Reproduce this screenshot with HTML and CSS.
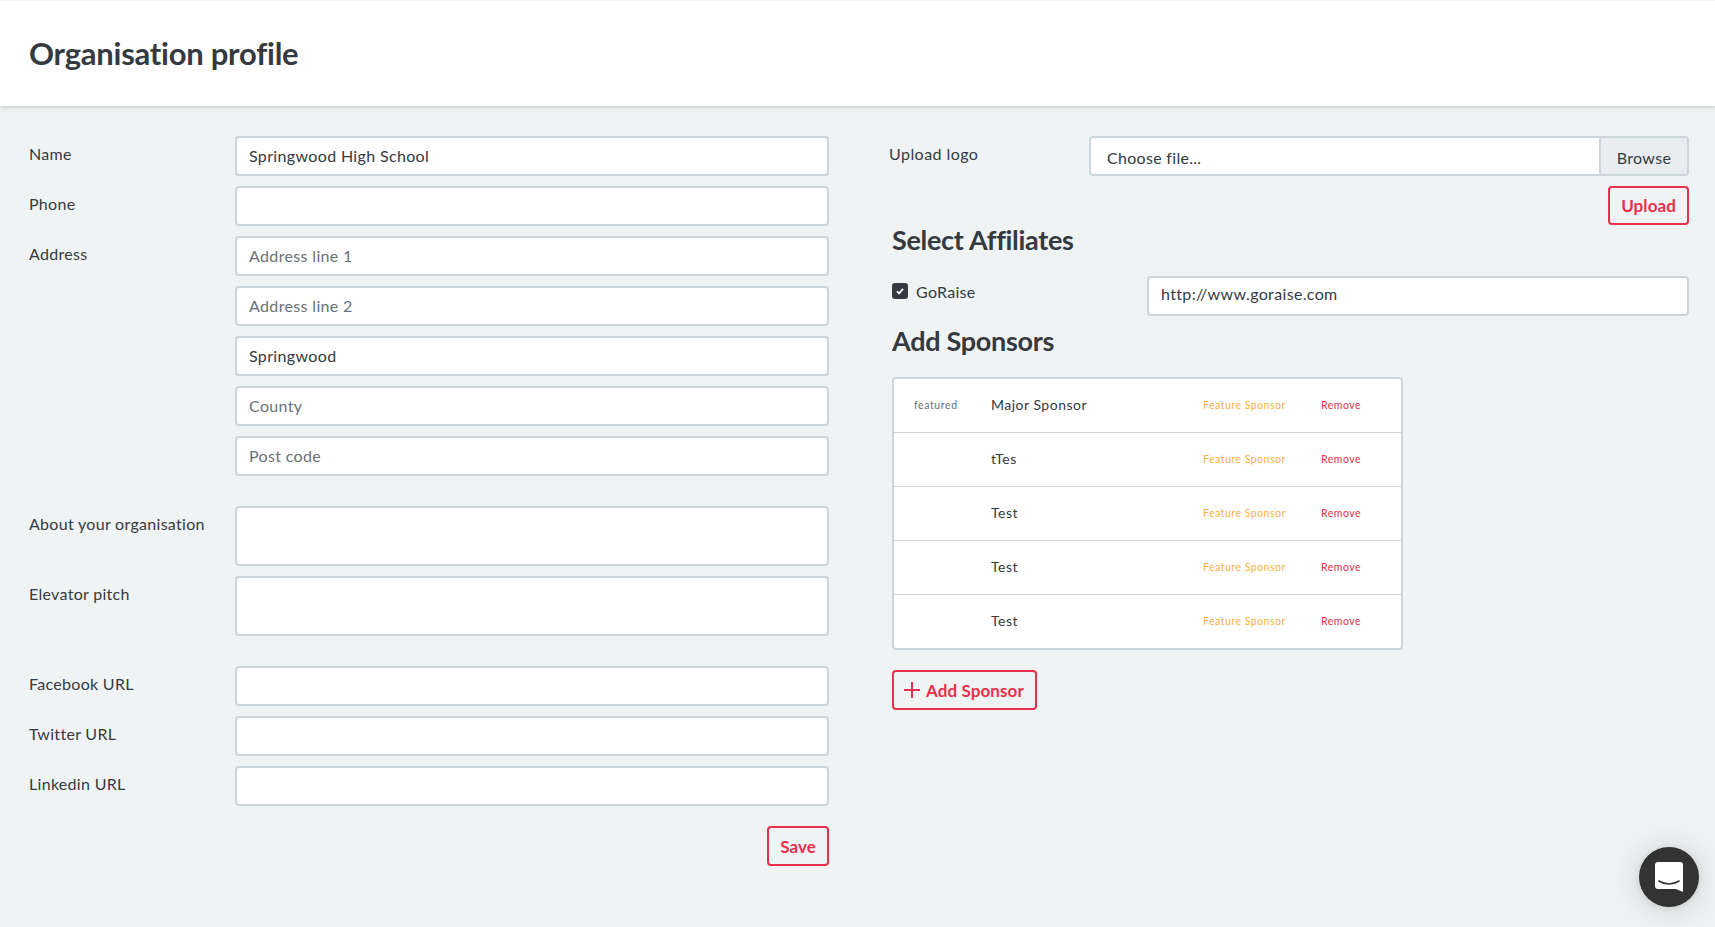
FILE: index.html
```html
<!DOCTYPE html>
<html lang="en">
<head>
  <meta charset="UTF-8">
  <title>Organisation profile</title>
  <link rel="stylesheet" href="styles.css">
</head>
<body>
  <header class="page-header">
    <h1>Organisation profile</h1>
  </header>

  <main class="page-body">
    <form class="profile-form">
      <div class="form-row">
        <label>Name</label>
        <input type="text" value="Springwood High School">
      </div>
      <div class="form-row">
        <label>Phone</label>
        <input type="text">
      </div>
      <div class="form-row form-row-end">
        <label>Address</label>
        <div class="field-stack">
          <input type="text" placeholder="Address line 1">
          <input type="text" placeholder="Address line 2">
          <input type="text" value="Springwood">
          <input type="text" placeholder="County">
          <input type="text" placeholder="Post code">
        </div>
      </div>
      <div class="form-row">
        <label>About your organisation</label>
        <textarea></textarea>
      </div>
      <div class="form-row form-row-end">
        <label>Elevator pitch</label>
        <textarea></textarea>
      </div>
      <div class="form-row">
        <label>Facebook URL</label>
        <input type="text">
      </div>
      <div class="form-row">
        <label>Twitter URL</label>
        <input type="text">
      </div>
      <div class="form-row">
        <label>Linkedin URL</label>
        <input type="text">
      </div>
      <div class="form-actions">
        <button type="button" class="btn">Save</button>
      </div>
    </form>

    <section class="side-panel">
      <div class="form-row upload-row">
        <label>Upload logo</label>
        <div class="file-input">
          <span class="file-name">Choose file...</span>
          <span class="file-browse">Browse</span>
        </div>
      </div>
      <div class="upload-actions">
        <button type="button" class="btn btn-upload">Upload</button>
      </div>

      <div class="side-content">
        <h2>Select Affiliates</h2>
        <div class="affiliate-row">
          <label class="affiliate-check">
            <span class="check-box">
              <svg width="10" height="10" viewBox="0 0 10 10"><path d="M2 5.3 4.1 7.4 8 2.8" fill="none" stroke="#fff" stroke-width="1.8"/></svg>
            </span>
            GoRaise
          </label>
          <input type="text" class="affiliate-url" value="http://www.goraise.com">
        </div>

        <h2 class="sponsors-title">Add Sponsors</h2>
        <div class="sponsor-list">
          <div class="sponsor-row">
            <span class="sponsor-tag">featured</span>
            <span class="sponsor-name">Major Sponsor</span>
            <a class="sponsor-feature">Feature Sponsor</a>
            <a class="sponsor-remove">Remove</a>
          </div>
          <div class="sponsor-row">
            <span class="sponsor-tag"></span>
            <span class="sponsor-name">tTes</span>
            <a class="sponsor-feature">Feature Sponsor</a>
            <a class="sponsor-remove">Remove</a>
          </div>
          <div class="sponsor-row">
            <span class="sponsor-tag"></span>
            <span class="sponsor-name">Test</span>
            <a class="sponsor-feature">Feature Sponsor</a>
            <a class="sponsor-remove">Remove</a>
          </div>
          <div class="sponsor-row">
            <span class="sponsor-tag"></span>
            <span class="sponsor-name">Test</span>
            <a class="sponsor-feature">Feature Sponsor</a>
            <a class="sponsor-remove">Remove</a>
          </div>
          <div class="sponsor-row">
            <span class="sponsor-tag"></span>
            <span class="sponsor-name">Test</span>
            <a class="sponsor-feature">Feature Sponsor</a>
            <a class="sponsor-remove">Remove</a>
          </div>
        </div>
        <button type="button" class="btn btn-add">
          <svg width="16" height="16" viewBox="0 0 16 16"><path d="M8 0v16M0 8h16" fill="none" stroke="#e8304a" stroke-width="2"/></svg>
          Add Sponsor
        </button>
      </div>
    </section>
  </main>

  <button type="button" class="chat-launcher">
    <svg width="28" height="32" viewBox="0 0 28 32">
      <path d="M3 1h22a3 3 0 0 1 3 3v27l-7-3H3a3 3 0 0 1-3-3V4a3 3 0 0 1 3-3z" fill="#fff"/>
      <path d="M4 20c6 4 14 4 20 0" fill="none" stroke="#333" stroke-width="1.6" stroke-linecap="round"/>
    </svg>
  </button>
</body>
</html>
```

FILE: styles.css
```css
/* Page */
* {
  box-sizing: border-box;
}

body {
  margin: 0;
  min-height: 100vh;
  background: #eff3f4;
  color: #343a3f;
  font-family: "Lato", sans-serif;
  font-size: 16px;
  letter-spacing: 0.3px;
}

.page-header {
  height: 106px;
  display: flex;
  align-items: center;
  padding: 0 29px 2px;
  background: #fff;
  border-top: 1px solid #f3f5f6;
  box-shadow: 0 1px 4px rgba(0, 0, 0, 0.2);
}

h1 {
  margin: 0;
  font-size: 31px;
  font-weight: 700;
  letter-spacing: -0.25px;
}

h2 {
  margin: 0;
  font-size: 27px;
  line-height: 32px;
  font-weight: 700;
  letter-spacing: -0.3px;
}

.page-body {
  display: grid;
  grid-template-columns: 1fr 1fr;
  column-gap: 60px;
  padding: 30px 26px 0 29px;
}

/* Form rows */
.form-row {
  display: grid;
  grid-template-columns: 206px 1fr;
  margin-bottom: 10px;
}

.form-row-end {
  margin-bottom: 30px;
}

.form-row label {
  padding-top: 7px;
  line-height: 22px;
}

.field-stack {
  display: flex;
  flex-direction: column;
  gap: 10px;
}

input[type="text"],
textarea {
  display: block;
  width: 100%;
  height: 40px;
  padding: 0 12px 2px;
  background: #fff;
  border: 2px solid #ccd5da;
  border-radius: 4px;
  color: #343a3f;
  font-family: inherit;
  font-size: 16px;
  letter-spacing: 0.35px;
  outline: none;
}

input::placeholder {
  color: #6a7177;
  opacity: 1;
}

textarea {
  height: 60px;
  resize: none;
}

/* Buttons */
.btn {
  height: 40px;
  padding: 0 11px;
  background: transparent;
  border: 2px solid #e8304a;
  border-radius: 4px;
  color: #e8304a;
  font-family: inherit;
  font-size: 17px;
  font-weight: 700;
  letter-spacing: 0.1px;
}

.btn-upload {
  height: 39px;
}

.form-actions {
  display: flex;
  justify-content: flex-end;
  margin-top: 20px;
}

/* Right column */
.upload-row {
  margin-bottom: 10px;
  grid-template-columns: 200px 1fr;
}

.upload-row label {
  letter-spacing: 0.45px;
}

.file-input {
  display: flex;
  height: 40px;
  background: #fff;
  border: 2px solid #ccd5da;
  border-radius: 4px;
  font-size: 16px;
}

.file-name {
  flex: 1;
  padding: 0 15px 0 16px;
  line-height: 40px;
}

.file-browse {
  width: 88px;
  text-align: center;
  line-height: 40px;
  background: #e9edef;
  border-left: 2px solid #ccd5da;
}

.upload-actions {
  display: flex;
  justify-content: flex-end;
}

.side-content {
  padding-left: 3px;
}

.side-content h2 {
  margin-top: -1px;
}

.affiliate-row {
  display: grid;
  grid-template-columns: 255px 1fr;
  margin-top: 20px;
}

.affiliate-check {
  display: flex;
  align-items: center;
  gap: 8px;
  height: 30px;
}

input.affiliate-url {
  padding-bottom: 5px;
}

.check-box {
  display: flex;
  align-items: center;
  justify-content: center;
  width: 16px;
  height: 16px;
  background: #343a3f;
  border-radius: 3px;
}

.side-content .sponsors-title {
  margin-top: 9px;
}

/* Sponsors */
.sponsor-list {
  width: 511px;
  margin-top: 20px;
  background: #fff;
  border: 2px solid #ccd5da;
  border-radius: 4px;
}

.sponsor-row {
  display: grid;
  grid-template-columns: 77px 212px 118px 1fr;
  align-items: center;
  height: 54px;
  padding: 0 0 2px 20px;
  border-bottom: 1px solid #ccd5da;
}

.sponsor-row:last-child {
  height: 53px;
  border-bottom: none;
}

.sponsor-tag {
  color: #6a7177;
  font-size: 10.5px;
  letter-spacing: 0.6px;
}

.sponsor-name {
  font-size: 14px;
  letter-spacing: 0.5px;
}

.sponsor-feature {
  color: #fbb040;
  font-size: 10.5px;
  letter-spacing: 0.5px;
}

.sponsor-remove {
  color: #e8304a;
  font-size: 10.5px;
  letter-spacing: 0.5px;
}

.btn-add {
  display: flex;
  align-items: center;
  gap: 6px;
  margin-top: 20px;
  width: 145px;
  padding: 0 10px;
  white-space: nowrap;
}

/* Chat launcher */
.chat-launcher {
  position: fixed;
  right: 16px;
  bottom: 20px;
  display: flex;
  align-items: center;
  justify-content: center;
  width: 60px;
  height: 60px;
  padding: 0;
  background: #333;
  border: none;
  border-radius: 50%;
  box-shadow: 0 1px 6px rgba(0, 0, 0, 0.1), 0 2px 32px rgba(0, 0, 0, 0.16);
}
```
